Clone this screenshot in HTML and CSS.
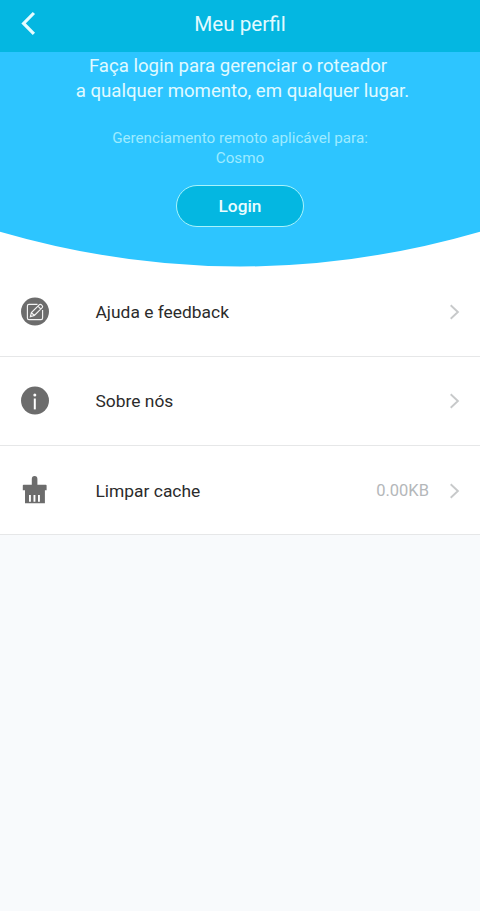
FILE: index.html
```html
<!DOCTYPE html>
<html lang="pt-BR">
<head>
<meta charset="utf-8">
<title>Meu perfil</title>
<link rel="stylesheet" href="styles.css">
</head>
<body>
<header class="topbar">
  <svg class="back" width="16" height="26" viewBox="0 0 16 26"><path d="M13.9 2 3.6 12.5 13.9 22.8"/></svg>
  <h1 class="title">Meu perfil</h1>
</header>
<section class="hero">
  <p class="lead"><span class="lead-first">Faça login para gerenciar o roteador</span><br><span class="lead-second">a qualquer momento, em qualquer lugar.</span></p>
  <p class="note">Gerenciamento remoto aplicável para:<br>Cosmo</p>
  <button class="login" type="button">Login</button>
  <svg class="curve" width="480" height="36" viewBox="0 0 480 36"><path d="M0 .7Q240 70.3 480 .7V36H0Z"/></svg>
</section>
<main class="list">
  <div class="row">
    <svg class="icon" width="30" height="30" viewBox="0 0 30 30">
      <circle class="fill" cx="15" cy="14.6" r="14"/>
      <path class="line" d="M17.5 7.4H9Q7.4 7.4 7.4 9V21Q7.4 22.6 9 22.6H21Q22.6 22.6 22.6 21V13"/>
      <path class="line" d="M10.4 19.6 11.4 15.6 19.2 7.8Q20.3 6.8 21.4 7.8L22.2 8.6Q23.1 9.6 22.2 10.7L14.4 18.5ZM17.9 9.2 20.9 12.2M11.4 15.6 14.4 18.5"/>
    </svg>
    <span class="label">Ajuda e feedback</span>
    <svg class="chevron" width="12" height="18" viewBox="0 0 12 18"><path d="M1.7 2.2 8.9 9 1.7 15.8"/></svg>
  </div>
  <div class="row">
    <svg class="icon" width="30" height="30" viewBox="0 0 30 30">
      <circle class="fill" cx="15" cy="14.6" r="14"/>
      <circle class="white" cx="14.8" cy="9.1" r="1.5"/>
      <path class="white" d="M13.8 12.5H15.8V23.4H13.8Z"/>
    </svg>
    <span class="label">Sobre nós</span>
    <svg class="chevron" width="12" height="18" viewBox="0 0 12 18"><path d="M1.7 2.2 8.9 9 1.7 15.8"/></svg>
  </div>
  <div class="row cache">
    <svg class="icon" width="30" height="30" viewBox="0 0 30 30">
      <path class="fill" d="M11.8 8.8V2.9Q11.8 0 14.6 0T17.4 2.9V8.8H25.8Q26.6 8.8 26.6 9.6V14.3H24.9V27.3H5V14.3H2.8V9.6Q2.8 8.8 3.6 8.8Z"/>
      <path class="white" d="M9 19.1H10.9V25.7H9ZM13.5 19.1H15.4V25.7H13.5ZM18 19.1H19.9V25.7H18Z"/>
    </svg>
    <span class="label">Limpar cache</span>
    <span class="value">0.00KB</span>
    <svg class="chevron" width="12" height="18" viewBox="0 0 12 18"><path d="M1.7 2.2 8.9 9 1.7 15.8"/></svg>
  </div>
</main>
</body>
</html>
```
FILE: styles.css
```css
* { box-sizing: border-box; }
body {
  margin: 0;
  min-height: 911px;
  background: #f8fafc;
  font-family: Roboto, "Liberation Sans", sans-serif;
  color: #2b2b2b;
}
.topbar {
  display: grid;
  grid-template-columns: 60px 1fr 60px;
  height: 52px;
  padding-bottom: 5px;
  align-items: center;
  background: #04b7e1;
}
.back {
  margin-left: 20px;
  fill: none;
  stroke: #e6fcff;
  stroke-width: 3.2;
}
.title {
  margin: 0;
  font-size: 20.7px;
  font-weight: 400;
  text-align: center;
  color: #e2faff;
}
.hero {
  display: flex;
  flex-direction: column;
  align-items: center;
  height: 215px;
  background: #2dc5ff;
  text-align: center;
}
.lead {
  margin: 2px 0 0;
  font-size: 18.63px;
  line-height: 25.4px;
  white-space: nowrap;
  color: #e0faff;
}
.lead-first { padding-right: 4px; }
.lead-second { padding-left: 5px; }
.note {
  margin: 23px 0 0;
  font-size: 15.2px;
  line-height: 20.4px;
  color: #9debff;
}
.login {
  width: 128px;
  height: 42px;
  flex: none;
  margin-top: 16px;
  padding: 1px 0 0;
  border: 1.5px solid #a9f3fb;
  border-radius: 21px;
  background: #04b7e1;
  font: 500 17.3px Roboto, "Liberation Sans", sans-serif;
  color: #e9fdff;
}
.curve {
  flex: none;
  margin-top: auto;
  fill: #fff;
}
.list { background: #fff; }
.row {
  display: flex;
  align-items: center;
  height: 89px;
  padding: 0 19px 0 20px;
  border-bottom: 1px solid #e6e7e8;
}
.row:first-child { height: 90px; }
.row.cache { padding-top: 1px; }
.icon { margin-right: 45.5px; }
.fill { fill: #6c6c6c; }
.white { fill: #fff; }
.line {
  fill: none;
  stroke: #f4f4f4;
  stroke-width: 1.15;
}
.label {
  flex: 1;
  font-size: 17.4px;
}
.value {
  margin-right: 20px;
  font-size: 16.5px;
  color: #b4b7ba;
}
.chevron {
  fill: none;
  stroke: #c7c9ca;
  stroke-width: 1.9;
}
```
